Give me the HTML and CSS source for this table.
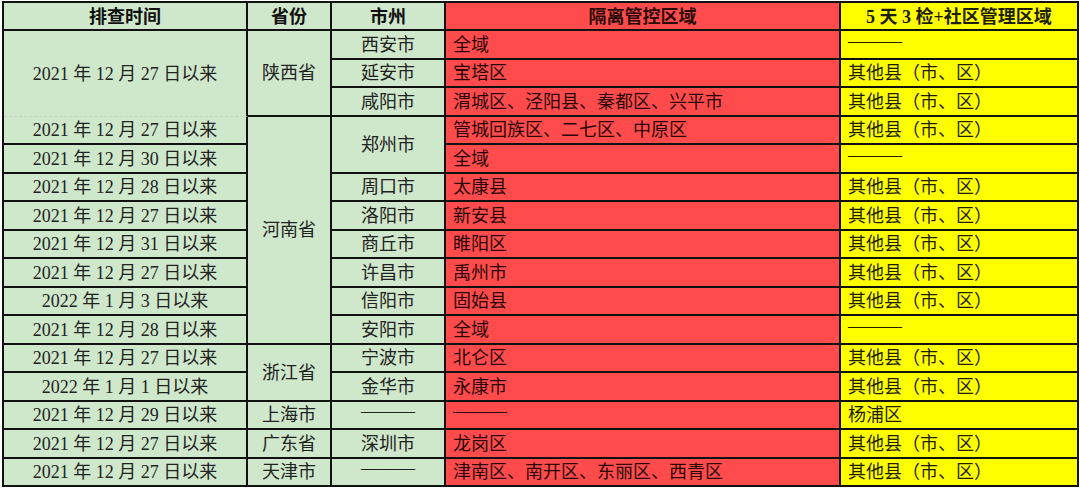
FILE: index.html
```html
<!DOCTYPE html>
<html lang="zh">
<head>
<meta charset="utf-8">
<title>排查区域</title>
<link rel="stylesheet" href="styles.css">
</head>
<body>
<div class="sheet">
  <div class="c g h">排查时间</div>
  <div class="c g h">省份</div>
  <div class="c g h">市州</div>
  <div class="c r h">隔离管控区域</div>
  <div class="c y h">5 天 3 检+社区管理区域</div>

  <!-- 陕西 -->
  <div class="c g span3 soft">2021 年 12 月 27 日以来</div>
  <div class="c g span3">陕西省</div>
  <div class="c g">西安市</div>
  <div class="c r l">全域</div>
  <div class="c y l dash">———</div>
  <div class="c g">延安市</div>
  <div class="c r l">宝塔区</div>
  <div class="c y l">其他县（市、区）</div>
  <div class="c g">咸阳市</div>
  <div class="c r l">渭城区、泾阳县、秦都区、兴平市</div>
  <div class="c y l">其他县（市、区）</div>

  <!-- 河南 -->
  <div class="c g">2021 年 12 月 27 日以来</div>
  <div class="c g span8">河南省</div>
  <div class="c g span2">郑州市</div>
  <div class="c r l">管城回族区、二七区、中原区</div>
  <div class="c y l">其他县（市、区）</div>
  <div class="c g">2021 年 12 月 30 日以来</div>
  <div class="c r l">全域</div>
  <div class="c y l dash">———</div>
  <div class="c g">2021 年 12 月 28 日以来</div>
  <div class="c g">周口市</div>
  <div class="c r l">太康县</div>
  <div class="c y l">其他县（市、区）</div>
  <div class="c g">2021 年 12 月 27 日以来</div>
  <div class="c g">洛阳市</div>
  <div class="c r l">新安县</div>
  <div class="c y l">其他县（市、区）</div>
  <div class="c g">2021 年 12 月 31 日以来</div>
  <div class="c g">商丘市</div>
  <div class="c r l">睢阳区</div>
  <div class="c y l">其他县（市、区）</div>
  <div class="c g">2021 年 12 月 27 日以来</div>
  <div class="c g">许昌市</div>
  <div class="c r l">禹州市</div>
  <div class="c y l">其他县（市、区）</div>
  <div class="c g">2022 年 1 月 3 日以来</div>
  <div class="c g">信阳市</div>
  <div class="c r l">固始县</div>
  <div class="c y l">其他县（市、区）</div>
  <div class="c g">2021 年 12 月 28 日以来</div>
  <div class="c g">安阳市</div>
  <div class="c r l">全域</div>
  <div class="c y l dash">———</div>

  <!-- 浙江 -->
  <div class="c g">2021 年 12 月 27 日以来</div>
  <div class="c g span2">浙江省</div>
  <div class="c g">宁波市</div>
  <div class="c r l">北仑区</div>
  <div class="c y l">其他县（市、区）</div>
  <div class="c g">2022 年 1 月 1 日以来</div>
  <div class="c g">金华市</div>
  <div class="c r l">永康市</div>
  <div class="c y l">其他县（市、区）</div>

  <!-- 上海 -->
  <div class="c g">2021 年 12 月 29 日以来</div>
  <div class="c g">上海市</div>
  <div class="c g dash">———</div>
  <div class="c r l dash">———</div>
  <div class="c y l">杨浦区</div>

  <!-- 广东 -->
  <div class="c g">2021 年 12 月 27 日以来</div>
  <div class="c g">广东省</div>
  <div class="c g">深圳市</div>
  <div class="c r l">龙岗区</div>
  <div class="c y l">其他县（市、区）</div>

  <!-- 天津 -->
  <div class="c g">2021 年 12 月 27 日以来</div>
  <div class="c g">天津市</div>
  <div class="c g dash">———</div>
  <div class="c r l">津南区、南开区、东丽区、西青区</div>
  <div class="c y l">其他县（市、区）</div>
</div>
</body>
</html>
```

FILE: styles.css
```css
html, body {
  margin: 0;
  padding: 0;
  background: #ffffff;
}

body {
  font-family: "Liberation Serif", "Noto Sans CJK SC", serif;
  font-size: 18px;
  color: #222222;
}

.sheet {
  margin: 1px 0 0 2px;
  width: 1075px;
  display: grid;
  grid-template-columns: 244px 84px 114px 395px 238px;
  grid-template-rows: 28px repeat(16, 28.5px);
  border-top: 2px solid #111;
  border-left: 2px solid #111;
}

.c {
  box-sizing: border-box;
  border-right: 2px solid #111;
  border-bottom: 2px solid #111;
  display: flex;
  align-items: center;
  justify-content: center;
  white-space: nowrap;
  line-height: 1;
  padding-top: 1px;
}

.l {
  justify-content: flex-start;
  padding-left: 7px;
}

.dash {
  padding-top: 0;
  padding-bottom: 7px;
}

.h {
  font-weight: bold;
  color: #111;
}

.g { background: #cfe8cb; }
.r { background: #ff4b4b; color: #2a0808; }
.y { background: #ffff00; color: #1e1e00; }

.span2 { grid-row: span 2; }
.span3 { grid-row: span 3; }
.span8 { grid-row: span 8; }

.soft {
  border-bottom: 1px dashed #c4d6c0;
}
```
